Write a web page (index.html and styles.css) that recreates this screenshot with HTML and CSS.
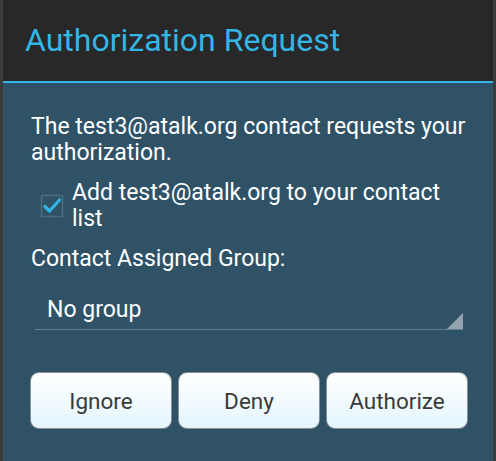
FILE: index.html
```html
<!DOCTYPE html>
<html>
<head>
<meta charset="utf-8">
<link rel="stylesheet" href="styles.css">
</head>
<body>
<div class="dialog">
  <div class="header">
    <h1 class="title">Authorization Request</h1>
  </div>
  <div class="content">
    <p class="message">The test3@atalk.org contact requests your authorization.</p>
    <div class="check-row">
      <span class="checkbox">
        <svg width="24" height="24" viewBox="0 0 24 24">
          <rect x="1.5" y="1.5" width="21" height="21" fill="none" stroke="#4b6d80" stroke-width="1.5"/>
          <path d="M5 12.5 L9.5 17 L19.5 6" fill="none" stroke="#33b5e5" stroke-width="3.2" stroke-linecap="round" stroke-linejoin="round"/>
        </svg>
      </span>
      <span class="check-label">Add test3@atalk.org to your contact list</span>
    </div>
    <div class="group-label">Contact Assigned Group:</div>
    <div class="spinner">
      <span class="spinner-text">No group</span>
      <span class="spinner-arrow"></span>
    </div>
    <div class="buttons">
      <button class="btn">Ignore</button>
      <button class="btn">Deny</button>
      <button class="btn">Authorize</button>
    </div>
  </div>
</div>
</body>
</html>
```
FILE: styles.css
```css
html, body {
  margin: 0;
  padding: 0;
  width: 496px;
  height: 461px;
  overflow: hidden;
  background: #3c3c3c;
}
body {
  font-family: Roboto, "Noto Sans", sans-serif;
}
.dialog {
  margin: 0 3px;
  height: 461px;
  display: flex;
  flex-direction: column;
  background: #2f5267;
}
.header {
  height: 81px;
  background: #282828;
  border-bottom: 2px solid #33b5e5;
  display: flex;
  align-items: center;
  padding-left: 22px;
  box-sizing: content-box;
}
.title {
  margin: 0;
  font-weight: 400;
  font-size: 32px;
  color: #33b5e5;
  padding-bottom: 2px;
}
.content {
  padding: 31px 22px 0 28px;
  color: #ffffff;
}
.message {
  margin: 0;
  font-size: 23px;
  line-height: 26px;
}
.check-row {
  display: flex;
  align-items: center;
  margin-top: 14px;
  margin-left: 9px;
}
.checkbox {
  width: 24px;
  height: 24px;
  display: flex;
  margin-right: 8px;
  flex-shrink: 0;
}
.check-label {
  font-size: 23px;
  line-height: 26px;
}
.group-label {
  margin-top: 14px;
  font-size: 23px;
  line-height: 26px;
}
.spinner {
  margin: 18px 0 0 4px;
  height: 39px;
  width: 428px;
  position: relative;
  border-bottom: 1px solid #5f7e90;
  display: flex;
  align-items: center;
}
.spinner-text {
  padding-left: 12px;
  font-size: 23px;
}
.spinner-arrow {
  position: absolute;
  right: 0;
  bottom: 0;
  width: 0;
  height: 0;
  border-left: 16px solid transparent;
  border-bottom: 16px solid #96a3ad;
}
.buttons {
  display: flex;
  gap: 6px;
  margin-top: 42px;
  margin-left: -1px;
}
.btn {
  width: 142px;
  height: 57px;
  border: 1px solid #8a8f93;
  border-radius: 9px;
  background: linear-gradient(#ffffff, #e4f6fd);
  font-family: Roboto, "Noto Sans", sans-serif;
  font-size: 22.5px;
  color: #3a3a3a;
  padding: 0;
  flex-shrink: 0;
}
```
